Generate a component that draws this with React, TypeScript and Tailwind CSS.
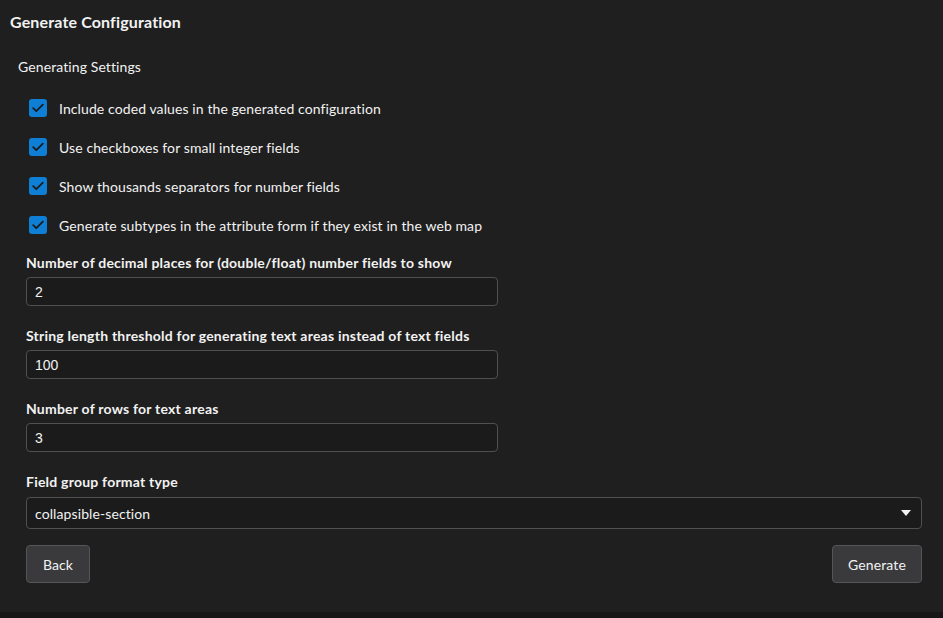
const options = [
  "Include coded values in the generated configuration",
  "Use checkboxes for small integer fields",
  "Show thousands separators for number fields",
  "Generate subtypes in the attribute form if they exist in the web map",
];

const fields = [
  { label: "Number of decimal places for (double/float) number fields to show", value: "2" },
  { label: "String length threshold for generating text areas instead of text fields", value: "100" },
  { label: "Number of rows for text areas", value: "3" },
];

function Check() {
  return (
    <span className="flex h-[18px] w-[18px] items-center justify-center rounded-[3px] bg-[#0f7fd6]">
      <svg width="12" height="10" viewBox="0 0 12 10" fill="none">
        <path d="M1.2 5.2 L4.3 8.2 L10.8 1.6" stroke="#1b1b1b" strokeWidth="1.8" strokeLinecap="round" strokeLinejoin="round" />
      </svg>
    </span>
  );
}

export default function App() {
  return (
    <div className="flex h-[618px] w-[943px] flex-col bg-[#161616] font-['Lato','Open_Sans',sans-serif] text-[#f2f2f2]">
      <div className="flex h-[612px] flex-col bg-[#1f1f1f]">
        <h1 className="px-[10px] pt-[12px] text-[16px] font-bold leading-[20px] tracking-[0.15px]">Generate Configuration</h1>
        <div className="px-[18px] pt-[25px] text-[14px] leading-[20px] tracking-[0.1px]">Generating Settings</div>
        <ul className="flex flex-col gap-[21px] pl-[29px] pt-[22px]">
          {options.map((o) => (
            <li key={o} className="flex h-[18px] items-center gap-[12px] text-[14px] tracking-[0.1px]">
              <Check />
              <span>{o}</span>
            </li>
          ))}
        </ul>
        <div className="flex flex-col gap-[21px] pl-[26px] pr-[21px] pt-[20px]">
          {fields.map((f) => (
            <div key={f.label} className="flex flex-col gap-[5px]">
              <label className="text-[14px] font-bold leading-[18px] tracking-[0.22px]">{f.label}</label>
              <input
                readOnly
                value={f.value}
                className="h-[29px] w-[472px] rounded-[4px] border border-[#505050] bg-[#1b1b1b] px-[8px] font-['Liberation_Sans',sans-serif] text-[14px] text-[#f2f2f2] outline-none"
              />
            </div>
          ))}
          <div className="flex flex-col gap-[6px]">
            <label className="text-[14px] font-bold leading-[18px] tracking-[0.22px]">Field group format type</label>
            <div className="flex h-[32px] items-center justify-between rounded-[4px] border border-[#505050] bg-[#1b1b1b] pl-[8px] pr-[10px] text-[14px] tracking-[0.1px]">
              <span>collapsible-section</span>
              <svg width="10" height="6" viewBox="0 0 10 6">
                <path d="M0 0 H10 L5 6 Z" fill="#f2f2f2" />
              </svg>
            </div>
          </div>
        </div>
        <div className="flex justify-between pl-[26px] pr-[21px] pt-[16px] text-[14px] tracking-[0.1px]">
          <button className="h-[38px] w-[64px] rounded-[4px] border border-[#555] bg-[#3a3a3c]">Back</button>
          <button className="h-[38px] w-[90px] rounded-[4px] border border-[#555] bg-[#3a3a3c]">Generate</button>
        </div>
      </div>
    </div>
  );
}
